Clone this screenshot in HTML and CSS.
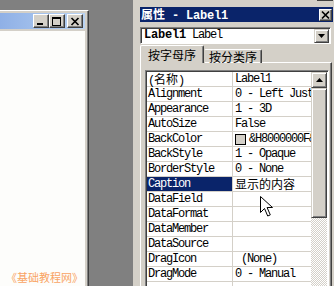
FILE: index.html
```html
<!DOCTYPE html>
<html lang="zh-CN">

<head>
    <meta charset="UTF-8">
    <meta name="viewport" content="width=device-width, initial-scale=1.0">
    <title>属性 - Label1</title>
    <link rel="stylesheet" href="styles.css">
</head>

<body>

    <div class="desk">

        <!-- 窗体设计窗口 -->
        <section class="form-win">
            <div class="form-cap">
                <span class="cbtn">
                    <svg width="14" height="12" viewBox="0 0 14 12"><rect x="3" y="8" width="6" height="2" /></svg>
                </span>
                <span class="cbtn">
                    <svg width="14" height="12" viewBox="0 0 14 12"><path d="M2 2h9v9h-9z M3 4v6h7v-6z" fill-rule="evenodd" /></svg>
                </span>
                <span class="cbtn cbtn-close">
                    <svg width="14" height="12" viewBox="0 0 14 12"><path d="M3.5 3l7 7M10.5 3l-7 7" stroke="#000" stroke-width="1.7" /></svg>
                </span>
            </div>
            <div class="form-body">
                <div class="mark">《基础教程网》</div>
            </div>
        </section>

        <!-- 属性窗口 -->
        <section class="side">
            <div class="proj-tail">
                <div class="proj-field"></div>
                <div class="proj-btn"></div>
            </div>

            <div class="props-cap">
                <span class="cap-text"><span class="cjk">属性</span> - Label1</span>
                <span class="xbtn">
                    <svg width="11" height="10" viewBox="0 0 11 10"><path d="M2 1.5l7 7M9 1.5l-7 7" stroke="#000" stroke-width="1.7" /></svg>
                </span>
            </div>

            <div class="combo">
                <span class="combo-text"><b>Label1</b> Label</span>
                <span class="combo-btn">
                    <svg width="7" height="4" viewBox="0 0 7 4"><path d="M0 0h7l-3.5 4z" /></svg>
                </span>
            </div>

            <div class="tabs">
                <div class="tab tab-on">按字母序</div>
                <div class="tab">按分类序</div>
            </div>

            <div class="page">
                <div class="grid-wrap">
                    <div class="grid">
                        <div class="row"><div class="k">(<span class="cjk">名称</span>)</div><div class="v">Label1</div></div>
                        <div class="row"><div class="k">Alignment</div><div class="v">0 - Left Justify</div></div>
                        <div class="row"><div class="k">Appearance</div><div class="v">1 - 3D</div></div>
                        <div class="row"><div class="k">AutoSize</div><div class="v">False</div></div>
                        <div class="row"><div class="k">BackColor</div><div class="v"><span class="swatch"></span>&amp;H8000000F&amp;</div></div>
                        <div class="row"><div class="k">BackStyle</div><div class="v">1 - Opaque</div></div>
                        <div class="row"><div class="k">BorderStyle</div><div class="v">0 - None</div></div>
                        <div class="row row-sel"><div class="k">Caption</div><div class="v"><span class="cjk">显示的内容</span></div></div>
                        <div class="row"><div class="k">DataField</div><div class="v"></div></div>
                        <div class="row"><div class="k">DataFormat</div><div class="v"></div></div>
                        <div class="row"><div class="k">DataMember</div><div class="v"></div></div>
                        <div class="row"><div class="k">DataSource</div><div class="v"></div></div>
                        <div class="row"><div class="k">DragIcon</div><div class="v"> (None)</div></div>
                        <div class="row"><div class="k">DragMode</div><div class="v">0 - Manual</div></div>
                        <div class="row"><div class="k"></div><div class="v"></div></div>
                    </div>
                    <div class="vscroll">
                        <div class="sb-up">
                            <svg width="7" height="4" viewBox="0 0 7 4"><path d="M0 4h7l-3.5-4z" /></svg>
                        </div>
                        <div class="sb-thumb"></div>
                        <div class="sb-track"></div>
                    </div>
                </div>
            </div>
        </section>

    </div>

    <!-- 鼠标指针 -->
    <svg class="cursor" width="13" height="22" viewBox="0 0 13 22">
        <path d="M0.5 0.5v16l4-4 3.2 7.5 2.6-1.1-3.2-7.4h5.4z" fill="#fff" stroke="#000" stroke-width="1" />
    </svg>

</body>

</html>
```

FILE: styles.css
```css
* {
    margin: 0;
    padding: 0;
    box-sizing: border-box;
}

body {
    position: relative;
    width: 334px;
    height: 286px;
    overflow: hidden;
    background: #808080;
    font-family: "Liberation Mono", "Noto Sans CJK SC", monospace;
    font-size: 12px;
    color: #000;
}

.cjk {
    font-family: "Noto Sans CJK SC", sans-serif;
    letter-spacing: 0;
}

.desk {
    display: flex;
    height: 286px;
}

/* 左侧窗体窗口 */
.form-win {
    width: 89px;
    margin-top: 10px;
    display: flex;
    flex-direction: column;
    background: #d4d0c8;
    border-top: 1px solid #fff;
    border-right: 1px solid #404040;
    box-shadow: inset -1px 0 #808080;
    padding: 2px 3px 0 0;
}

.form-cap {
    height: 16px;
    display: flex;
    justify-content: flex-end;
    align-items: center;
    padding-right: 2px;
    background: linear-gradient(to right, #8fb0e6, #b9d3f3);
}

.cbtn {
    width: 16px;
    height: 14px;
    display: flex;
    background: #d4d0c8;
    border: 1px solid;
    border-color: #fff #404040 #404040 #fff;
    box-shadow: inset -1px -1px #808080;
}

.cbtn-close {
    margin-left: 2px;
}

.form-body {
    flex: 1;
    margin-top: 2px;
    background: #fdfdfb;
    display: flex;
    flex-direction: column;
    justify-content: flex-end;
}

.mark {
    font-family: "Noto Sans CJK SC", sans-serif;
    font-size: 11px;
    line-height: 12px;
    color: #f9a464;
    padding: 0 0 3px 6px;
}

/* 右侧属性窗口 */
.side {
    width: 201px;
    margin-left: 44px;
    background: #d4d0c8;
    padding-left: 7px;
    display: flex;
    flex-direction: column;
}

.proj-tail {
    height: 4px;
    display: flex;
}

.proj-field {
    flex: 1;
    background: #fff;
    border-bottom: 1px solid #d4d0c8;
}

.proj-btn {
    width: 16px;
    margin-right: 1px;
    border-right: 1px solid #404040;
    border-bottom: 1px solid #404040;
    box-shadow: inset -1px -1px #808080;
}

.props-cap {
    height: 15px;
    margin-top: 6px;
    margin-right: 1px;
    display: flex;
    align-items: center;
    justify-content: space-between;
    background: #0a246a;
    color: #fff;
    font-weight: bold;
    padding: 0 1px;
}

.cap-text {
    letter-spacing: -0.2px;
    line-height: 15px;
}

.cap-text .cjk {
    font-weight: bold;
}

.xbtn {
    width: 13px;
    height: 12px;
    display: flex;
    background: #d4d0c8;
    border: 1px solid;
    border-color: #fff #404040 #404040 #fff;
    box-shadow: inset -1px -1px #808080;
}

.combo {
    height: 17px;
    width: 191px;
    margin-top: 5px;
    display: flex;
    align-items: center;
    background: #fff;
    border: 1px solid;
    border-color: #808080 #fff #fff #808080;
    box-shadow: inset 1px 1px #404040;
    padding: 0 1px 0 3px;
}

.combo-text {
    flex: 1;
    letter-spacing: -1.2px;
    line-height: 15px;
}

.combo-text b {
    letter-spacing: -0.2px;
}

.combo-btn {
    width: 15px;
    height: 14px;
    display: flex;
    align-items: center;
    justify-content: center;
    background: #d4d0c8;
    border: 1px solid;
    border-color: #d4d0c8 #404040 #404040 #d4d0c8;
    box-shadow: inset 1px 1px #fff, inset -1px -1px #808080;
}

.tabs {
    height: 17px;
    margin-top: 2px;
    display: flex;
    align-items: flex-end;
    position: relative;
    z-index: 1;
    margin-bottom: -1px;
}

.tab {
    height: 14px;
    font-family: "Noto Sans CJK SC", sans-serif;
    font-size: 12px;
    line-height: 12px;
    padding: 1px 4px 0 4px;
    border: 1px solid;
    border-bottom: none;
    border-color: #fff #404040 #fff #d4d0c8;
    border-radius: 2px 2px 0 0;
    box-shadow: inset -1px 0 #808080;
}

.tab-on {
    height: 18px;
    width: 64px;
    padding: 3px 0 0 7px;
    border-left-color: #fff;
    background: #d4d0c8;
    position: relative;
    z-index: 1;
}

.page {
    flex: 1;
    width: 192px;
    border-top: 1px solid #fff;
    border-left: 1px solid #fff;
    border-right: 1px solid #404040;
    box-shadow: inset -1px 0 #808080;
    padding: 7px 0 0 4px;
}

.grid-wrap {
    width: 184px;
    height: 230px;
    display: flex;
    border: 1px solid;
    border-color: #808080 #fff #fff #808080;
    box-shadow: inset 1px 1px #404040;
    padding: 1px 0 0 1px;
    background: #fff;
}

.grid {
    width: 164px;
}

.row {
    height: 15px;
    display: flex;
    border-bottom: 1px solid #d4d0c8;
    line-height: 14px;
    letter-spacing: -1.2px;
    white-space: nowrap;
}

.row .cjk {
    line-height: 14px;
}

.k {
    width: 86px;
    padding-left: 1px;
    border-right: 1px solid #d4d0c8;
}

.v {
    flex: 1;
    padding-left: 2px;
    overflow: hidden;
    display: flex;
    align-items: center;
    white-space: pre;
}

.row-sel .v {
    overflow: visible;
}

.row-sel .k {
    background: #0a246a;
    color: #fff;
}

.swatch {
    width: 11px;
    height: 11px;
    margin-right: 3px;
    background: #d4d0c8;
    border: 1px solid #000;
    flex: none;
}

/* 垂直滚动条 */
.vscroll {
    width: 16px;
    display: flex;
    flex-direction: column;
}

.sb-up,
.sb-thumb {
    background: #d4d0c8;
    border: 1px solid;
    border-color: #d4d0c8 #404040 #404040 #d4d0c8;
    box-shadow: inset 1px 1px #fff, inset -1px -1px #808080;
}

.sb-up {
    height: 16px;
    display: flex;
    align-items: center;
    justify-content: center;
}

.sb-thumb {
    height: 130px;
}

.sb-track {
    flex: 1;
    background: repeating-conic-gradient(#fff 0 25%, #d4d0c8 0 50%) 0 0 / 2px 2px;
}

.cursor {
    position: absolute;
    left: 260px;
    top: 196px;
}
```
